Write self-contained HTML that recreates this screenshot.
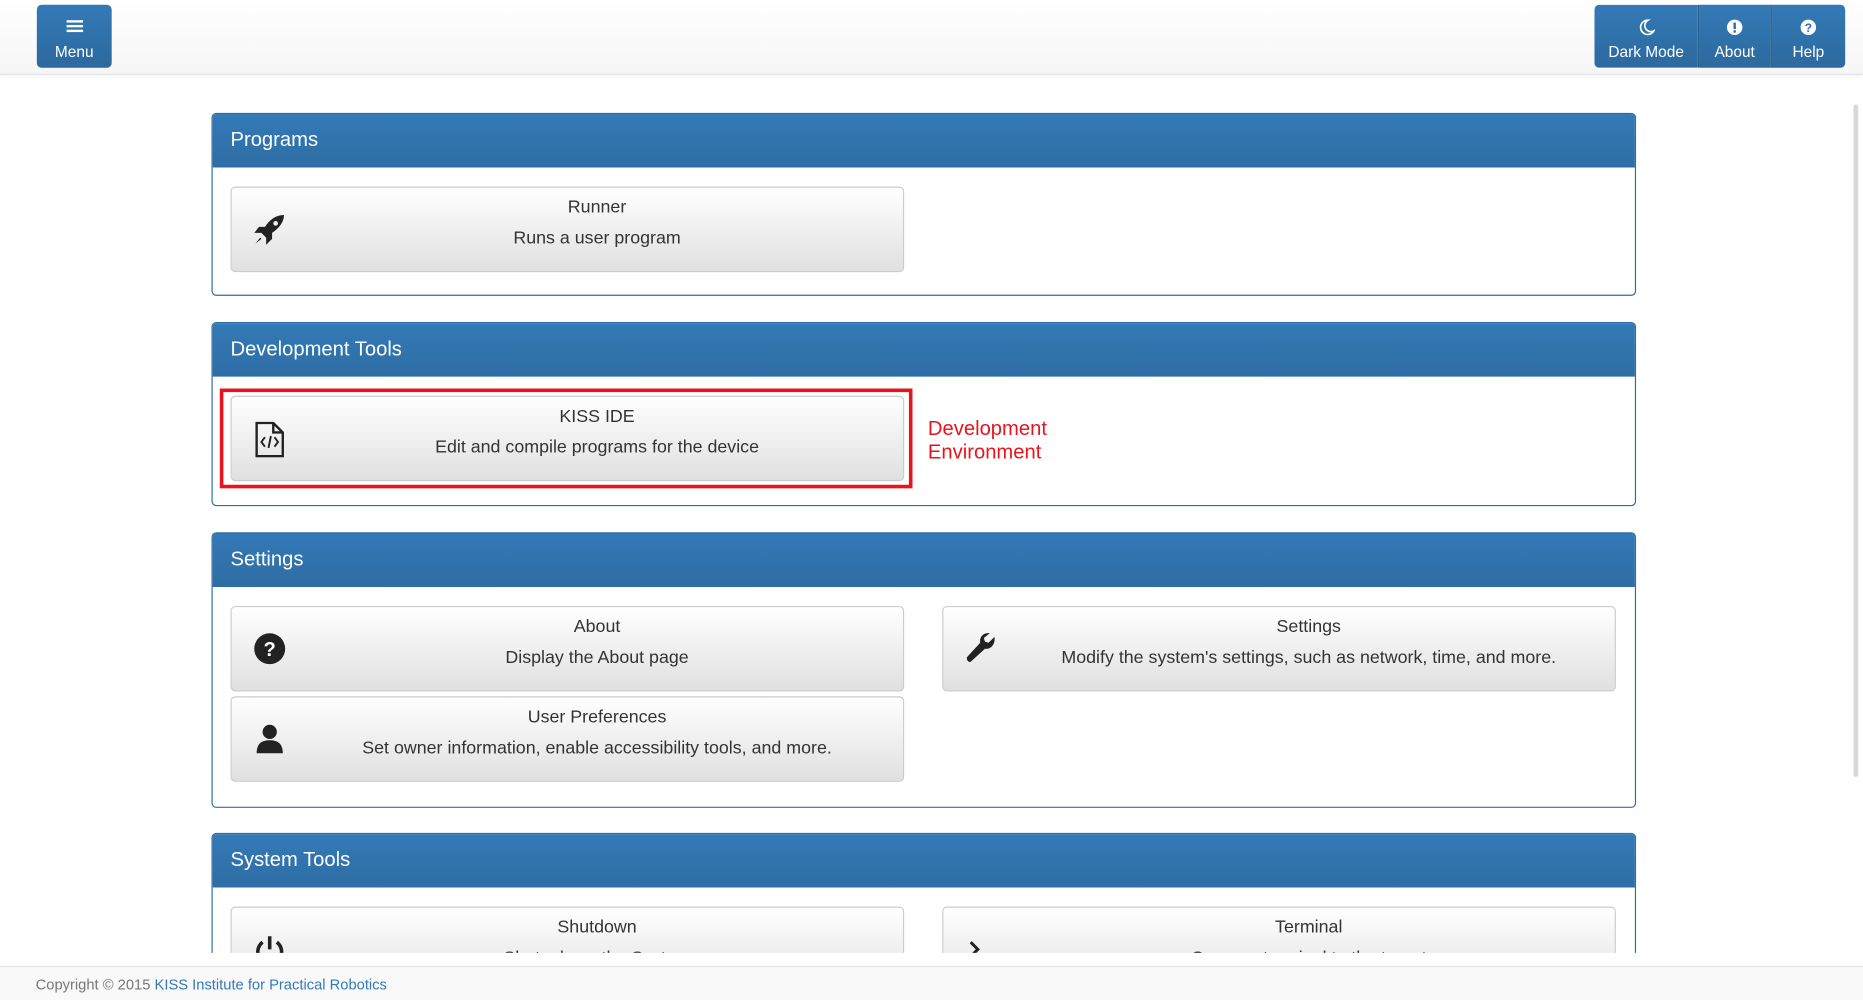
<!DOCTYPE html>
<html><head><meta charset="utf-8"><style>
html,body{margin:0;padding:0;width:1863px;height:1000px;overflow:hidden;background:#fff;}
#s{position:absolute;left:0;top:0;width:1568px;height:842px;overflow:hidden;transform:scale(1.18814);transform-origin:0 0;font-family:"Liberation Sans",Arial,sans-serif;color:#333;}
.hdr{position:absolute;left:0;top:0;width:1568px;height:62px;background:linear-gradient(#fff,#f6f6f6);border-bottom:1px solid #e2e2e2;box-shadow:0 1px 3px rgba(0,0,0,.06);}
.nb{position:absolute;top:4px;height:53px;background:linear-gradient(#337ab7,#2c699e);color:#fff;font-size:13px;text-align:center;box-sizing:border-box;}
.nb svg{position:absolute;top:12px;left:50%;margin-left:-7px}
.nb span{position:absolute;left:0;right:0;top:32px}
.main{position:absolute;left:0;top:63px;width:1557px;height:739px;overflow:hidden;}
.panel{position:absolute;left:178px;width:1199px;border:1px solid #2e6da4;border-radius:4px;box-sizing:border-box;background:#fff;}
.ph{height:45px;background:linear-gradient(#337ab7,#2e6da4);color:#fff;font-size:17px;line-height:44px;padding-left:15px;border-radius:3px 3px 0 0}
.btn{position:absolute;width:567px;height:72px;border:1px solid #ccc;border-radius:4px;box-sizing:border-box;background:linear-gradient(#fff,#e0e0e0);text-align:center;font-size:15px;}
.btn .t{position:absolute;left:50px;right:0;top:8px}
.btn .d{position:absolute;left:50px;right:0;top:34px}
.btn svg{position:absolute;left:18px;top:21px}
.foot{position:absolute;left:0;top:813px;width:1568px;height:29px;background:#f9f9f9;border-top:1px solid #e5e5e5;font-size:12.4px;color:#777;line-height:31px;padding-left:30px;box-sizing:border-box}
.foot a{color:#337ab7;text-decoration:none}
</style></head><body><div id="s">
<div class="hdr">
 <div class="nb" style="left:31px;width:63px;border-radius:4px"><svg width="14" height="12"><rect y="1" width="14" height="2" fill="#fff"/><rect y="5" width="14" height="2" fill="#fff"/><rect y="9" width="14" height="2" fill="#fff"/></svg><span>Menu</span></div>
 <div class="nb" style="left:1342px;width:88px;border-radius:4px 0 0 4px;border-right:1px solid #285e8e"><svg width="14" height="14"><path d="M8 1A6 6 0 1 0 13 10A5 5 0 0 1 8 1Z" fill="none" stroke="#fff" stroke-width="1.4"/></svg><span>Dark Mode</span></div>
 <div class="nb" style="left:1430px;width:61px;border-right:1px solid #285e8e"><svg width="14" height="14"><circle cx="7" cy="7" r="6.5" fill="#fff"/><rect x="6" y="3" width="2" height="5.5" fill="#2e6da4"/><rect x="6" y="9.5" width="2" height="2" fill="#2e6da4"/></svg><span>About</span></div>
 <div class="nb" style="left:1491px;width:62px;border-radius:0 4px 4px 0"><svg width="14" height="14"><circle cx="7" cy="7" r="6.5" fill="#fff"/><text x="7" y="11" font-size="10" font-weight="bold" text-anchor="middle" fill="#2e6da4" font-family="Liberation Sans">?</text></svg><span>Help</span></div>
</div>
<div class="main">
 <div class="panel" style="top:32px;height:154px"><div class="ph">Programs</div>
  <div class="btn" style="left:15px;top:61px"><svg width="28" height="28" viewBox="0 0 28 28"><path d="M26 2C19 2 14 6 10 12L5 12L1 17L7 17L11 21L11 27L16 22L16 17C22 13 26 8 26 2Z" fill="#222"/><circle cx="19" cy="9" r="2" fill="#eee"/><path d="M6 21L2 26L7 22Z" fill="#222"/></svg><div class="t">Runner</div><div class="d">Runs a user program</div></div>
 </div>
 <div class="panel" style="top:208px;height:155px"><div class="ph">Development Tools</div>
  <div style="position:absolute;left:6px;top:55px;width:583px;height:84px;border:3px solid #e8141c;box-sizing:border-box"></div>
  <div class="btn" style="left:15px;top:61px"><svg width="28" height="30" viewBox="0 0 28 30"><path d="M3 1H17L25 9V29H3Z M17 1V9H25" fill="none" stroke="#222" stroke-width="2"/><path d="M10 13L7 17L10 21M18 13L21 17L18 21M15 12L13 22" fill="none" stroke="#222" stroke-width="1.6"/></svg><div class="t">KISS IDE</div><div class="d">Edit and compile programs for the device</div></div>
  <div style="position:absolute;left:602px;top:79px;color:#e8141c;font-size:17px;line-height:20px">Development<br>Environment</div>
 </div>
 <div class="panel" style="top:385px;height:232px"><div class="ph">Settings</div>
  <div class="btn" style="left:15px;top:61px"><svg width="28" height="28" viewBox="0 0 28 28"><circle cx="14" cy="14" r="13" fill="#222"/><text x="14" y="20" font-size="17" font-weight="bold" text-anchor="middle" fill="#fff" font-family="Liberation Sans">?</text></svg><div class="t">About</div><div class="d">Display the About page</div></div>
  <div class="btn" style="left:614px;top:61px"><svg width="28" height="28" viewBox="0 0 28 28"><path d="M25 4L20 9L17 8L16 5L21 1C16 0 12 4 13 9L2 21C1 23 3 26 5 25L17 14C22 15 26 10 25 4Z" fill="#222"/></svg><div class="t">Settings</div><div class="d">Modify the system's settings, such as network, time, and more.</div></div>
  <div class="btn" style="left:15px;top:137px"><svg width="28" height="28" viewBox="0 0 28 28"><circle cx="14" cy="8" r="6" fill="#222"/><path d="M3 26C3 18 7 15 14 15C21 15 25 18 25 26Z" fill="#222"/></svg><div class="t">User Preferences</div><div class="d">Set owner information, enable accessibility tools, and more.</div></div>
 </div>
 <div class="panel" style="top:638px;height:200px"><div class="ph">System Tools</div>
  <div class="btn" style="left:15px;top:61px"><svg width="28" height="28" viewBox="0 0 28 28"><path d="M8 8A10 10 0 1 0 20 8" fill="none" stroke="#222" stroke-width="3"/><path d="M14 3V14" stroke="#222" stroke-width="3"/></svg><div class="t">Shutdown</div><div class="d">Shuts down the System</div></div>
  <div class="btn" style="left:614px;top:61px"><svg width="28" height="28" viewBox="0 0 28 28"><path d="M5 8L11 14L5 20" fill="none" stroke="#222" stroke-width="2.5"/></svg><div class="t">Terminal</div><div class="d">Opens a terminal to the target</div></div>
 </div>
</div>
<div style="position:absolute;left:1560px;top:88px;width:4px;height:566px;background:#d8d8d8;border-radius:2px"></div>
<div class="foot">Copyright © 2015 <a>KISS Institute for Practical Robotics</a></div>
</div></body></html>
